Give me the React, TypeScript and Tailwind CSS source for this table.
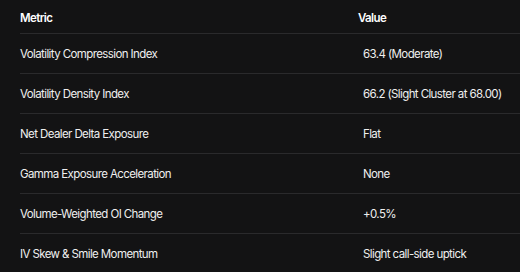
import React from "react";

const rows = [
  { metric: "Volatility Compression Index", value: "63.4 (Moderate)" },
  { metric: "Volatility Density Index", value: "66.2 (Slight Cluster at 68.00)" },
  { metric: "Net Dealer Delta Exposure", value: "Flat" },
  { metric: "Gamma Exposure Acceleration", value: "None" },
  { metric: "Volume-Weighted OI Change", value: "+0.5%" },
  { metric: "IV Skew & Smile Momentum", value: "Slight call-side uptick" },
];

export default function App() {
  return (
    <div
      className="w-[520px] h-[272px] overflow-hidden bg-[#131314] pl-5 text-[11.5px] tracking-[-0.6px] text-[#efefef] whitespace-nowrap"
      style={{ fontFamily: "Inter, 'Noto Sans', sans-serif" }}
    >
      <div className="grid grid-cols-[338px_1fr] h-[33px] items-center font-semibold text-white">
        <div className="pt-[4px]">Metric</div>
        <div className="pt-[4px]">Value</div>
      </div>
      {rows.map((row) => (
        <div
          key={row.metric}
          className="grid grid-cols-[338px_1fr] h-[40px] items-center border-t border-[#2a2a2c] pt-[3px]"
        >
          <div>{row.metric}</div>
          <div className="pl-[5px]">{row.value}</div>
        </div>
      ))}
    </div>
  );
}
